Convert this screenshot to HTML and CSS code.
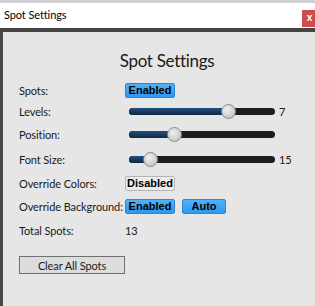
FILE: index.html
```html
<!DOCTYPE html>
<html lang="en">
<head>
  <meta charset="UTF-8">
  <title>Spot Settings</title>
  <link rel="stylesheet" href="styles.css">
</head>
<body>
  <div class="backdrop"></div>
  <div class="titlebar">
    <span class="title">Spot Settings</span>
    <span class="close">x</span>
  </div>

  <div class="window">
    <h1>Spot Settings</h1>

    <div class="row r-spots">
      <span class="label">Spots:</span>
      <span class="toggle on">Enabled</span>
    </div>

    <div class="row r-levels">
      <span class="label">Levels:</span>
      <div class="slider">
        <div class="fill" style="width: 70%"></div>
        <div class="thumb" style="--pos: 0.7"></div>
      </div>
      <span class="value">7</span>
    </div>

    <div class="row r-position">
      <span class="label">Position:</span>
      <div class="slider">
        <div class="fill" style="width: 31%"></div>
        <div class="thumb" style="--pos: 0.29"></div>
      </div>
    </div>

    <div class="row r-font">
      <span class="label">Font Size:</span>
      <div class="slider">
        <div class="fill" style="width: 14%"></div>
        <div class="thumb" style="--pos: 0.106"></div>
      </div>
      <span class="value">15</span>
    </div>

    <div class="row r-colors">
      <span class="label">Override Colors:</span>
      <span class="toggle off">Disabled</span>
    </div>

    <div class="row r-bg">
      <span class="label">Override Background:</span>
      <span class="toggle on">Enabled</span>
      <span class="toggle on auto">Auto</span>
    </div>

    <div class="row r-total">
      <span class="label">Total Spots:</span>
      <span class="count">13</span>
    </div>

    <button class="clear-btn">Clear All Spots</button>
  </div>
</body>
</html>
```

FILE: styles.css
```css
html, body {
  margin: 0;
  padding: 0;
}

body {
  width: 315px;
  height: 306px;
  overflow: hidden;
  display: flex;
  flex-direction: column;
  font-family: Lato, "Noto Sans", sans-serif;
  font-size: 11px;
  letter-spacing: -0.1px;
  color: #1a1a1a;
  background-color: #e6e6e6;
}

.backdrop {
  height: 3px;
  background-color: #cfcfcf;
}

.titlebar {
  height: 25px;
  background-color: #fff;
  display: flex;
  align-items: center;
  justify-content: space-between;
  padding-left: 4px;
}

.title {
  font-size: 11px;
  color: #000;
  margin-top: -2px;
}

.close {
  width: 13px;
  height: 17px;
  margin-top: 6px;
  background-color: #d24b4b;
  color: #fff;
  font-family: "Liberation Sans", Arial, sans-serif;
  font-size: 10px;
  font-weight: bold;
  line-height: 15px;
  text-align: center;
  padding-left: 2px;
  box-sizing: border-box;
}

.window {
  flex: 1;
  background-color: #e6e6e6;
  border-top: 4px solid #444;
  border-left: 3px solid #4a4a4a;
  padding-left: 16px;
}

h1 {
  margin: 0;
  height: 48px;
  box-sizing: border-box;
  padding-top: 17px;
  font-size: 17px;
  font-weight: normal;
  letter-spacing: -0.3px;
  line-height: 24px;
  text-align: center;
  color: #1a1a1a;
}

.row {
  display: flex;
  align-items: center;
}

.r-spots { height: 20px; }
.r-levels { height: 22px; }
.r-position { height: 25px; }
.r-font { height: 25px; }
.r-colors { height: 23px; }
.r-bg { height: 23px; }
.r-total { height: 24px; }

.label {
  width: 106px;
  flex-shrink: 0;
  white-space: nowrap;
}

.toggle {
  height: 15px;
  box-sizing: border-box;
  padding: 0;
  border-radius: 2px;
  font-family: "Liberation Sans", Arial, sans-serif;
  font-size: 11px;
  font-weight: bold;
  letter-spacing: 0;
  line-height: 13px;
  color: #000;
  text-align: center;
  white-space: nowrap;
}

.toggle.on {
  width: 50px;
  background: linear-gradient(#4fb2f8, #2f98ee);
  border: 1px solid #2a86d6;
}

.toggle.off {
  width: 50px;
  background-color: #ececec;
  border: 1px solid #b5b5b5;
}

.toggle.auto {
  width: 44px;
  margin-left: 7px;
}

.slider {
  position: relative;
  width: 146px;
  height: 7px;
  margin-left: 4px;
  border-radius: 4px;
  background-color: #1d1d1d;
}

.fill {
  height: 100%;
  border-radius: 4px 0 0 4px;
  background: linear-gradient(#23507e, #0d2846);
}

.thumb {
  position: absolute;
  top: -4px;
  left: calc(var(--pos) * (100% - 15px));
  width: 15px;
  height: 15px;
  box-sizing: border-box;
  border-radius: 50%;
  border: 1px solid #8c8c8c;
  background: radial-gradient(circle at 40% 35%, #f0f0f0, #c9c9c9 70%, #b0b0b0);
}

.value {
  margin-left: 4px;
}

.clear-btn {
  margin-top: 14px;
  width: 106px;
  height: 18px;
  padding: 0;
  border: 1px solid #707070;
  background-color: #dddddd;
  font-family: Lato, "Noto Sans", sans-serif;
  font-size: 11px;
  letter-spacing: -0.1px;
  line-height: 15px;
  color: #1a1a1a;
}
```
